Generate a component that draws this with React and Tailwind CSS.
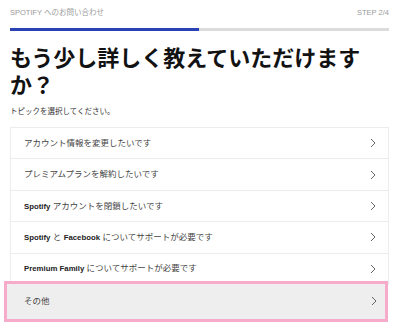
import React from "react";

const Chevron = () => (
  <svg width="6" height="10" viewBox="0 0 6 10" className="shrink-0">
    <polyline points="1,1 5,5 1,9" fill="none" stroke="#555" strokeWidth="0.9" />
  </svg>
);

const B = ({ children }) => (
  <b className="font-bold text-[#222] text-[7.8px]">{children}</b>
);

const rows = [
  [<span key="a">アカウント情報を変更したいです</span>],
  [<span key="a">プレミアムプランを解約したいです</span>],
  [<B key="a">Spotify</B>, <span key="b"> アカウントを閉鎖したいです</span>],
  [
    <B key="a">Spotify</B>,
    <span key="b"> と </span>,
    <B key="c">Facebook</B>,
    <span key="d"> についてサポートが必要です</span>,
  ],
  [<B key="a">Premium Family</B>, <span key="b"> についてサポートが必要です</span>],
];

export default function App() {
  return (
    <div
      className="w-[400px] h-[323px] bg-white overflow-hidden px-[10px] pt-[8px]"
      style={{ fontFamily: '"Liberation Sans", "Noto Sans CJK JP", sans-serif' }}
    >
      <div className="flex justify-between items-center text-[7.5px] text-[#9a9a9a] leading-[10px] pr-[1px]">
        <span>SPOTIFY へのお問い合わせ</span>
        <span>STEP 2/4</span>
      </div>
      <div className="mt-[10px] h-[3px] w-[379px] bg-[#dcdcdc] flex">
        <div className="h-full w-[189px] bg-[#2a42b6]" />
      </div>
      <h1
        className="mt-[12px] text-[22px] font-bold leading-[27px] text-[#121212] w-[379px]"
        style={{ fontFamily: '"Noto Sans CJK JP", sans-serif' }}
      >
        もう少し詳しく教えていただけますか？
      </h1>
      <p
        className="mt-[9px] text-[7.5px] leading-[10px] text-[#333]"
        style={{ fontFamily: '"Noto Sans CJK JP", sans-serif' }}
      >
        トピックを選択してください。
      </p>
      <div className="mt-[11px] w-[379px] border-t border-[#ececec]">
        {rows.map((r, i) => (
          <div
            key={i}
            className="h-[31.4px] border-b border-x border-[#ececec] flex items-center justify-between pl-[13px] pr-[12px] text-[8.5px] text-[#444]"
          >
            <div>{r}</div>
            <Chevron />
          </div>
        ))}
        <div className="-mt-[4px] -ml-[6px] w-[384px] h-[41px] border-[3px] border-[#f5abc9] bg-[#eeeeee] flex items-center justify-between pl-[17px] pr-[8px] text-[8.5px] text-[#444]">
          <span>その他</span>
          <Chevron />
        </div>
      </div>
    </div>
  );
}
